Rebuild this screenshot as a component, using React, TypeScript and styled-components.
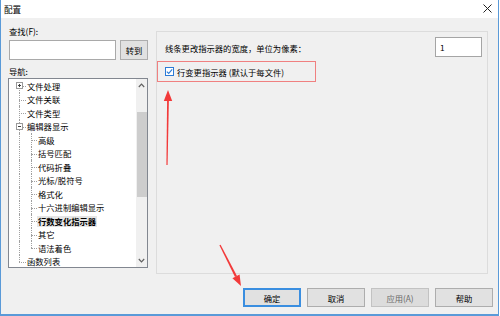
import styled, { createGlobalStyle } from 'styled-components';

const GlobalStyle = createGlobalStyle`
  html, body {
    margin: 0;
    padding: 0;
    background: #ffffff;
  }
  body {
    font-family: "Noto Sans CJK SC", "Noto Sans", sans-serif;
    font-size: 8.3px;
    color: #000;
  }
`;

type TreeNode = {
  label: string;
  level: 0 | 1;
  expander?: 'plus' | 'minus';
  selected?: boolean;
  first?: boolean;
  last?: boolean;
  lastChild?: boolean;
};

const nodes: TreeNode[] = [
  { label: '文件处理', level: 0, expander: 'plus', first: true },
  { label: '文件关联', level: 0 },
  { label: '文件类型', level: 0 },
  { label: '编辑器显示', level: 0, expander: 'minus' },
  { label: '高级', level: 1 },
  { label: '括号匹配', level: 1 },
  { label: '代码折叠', level: 1 },
  { label: '光标/脱符号', level: 1 },
  { label: '格式化', level: 1 },
  { label: '十六进制编辑显示', level: 1 },
  { label: '行数变化指示器', level: 1, selected: true },
  { label: '其它', level: 1 },
  { label: '语法着色', level: 1, lastChild: true },
  { label: '函数列表', level: 0, last: true },
];

const buttons = [
  { label: '确定', focused: true },
  { label: '取消' },
  { label: '应用(A)', disabled: true },
  { label: '帮助' },
];

export default function App() {
  return (
    <>
      <GlobalStyle />
      <Window>
        <TitleBar>
          <Title>配置</Title>
          <CloseIcon width="9" height="9" viewBox="0 0 9 9">
            <path d="M0.5 0.5 L8.5 8.5 M8.5 0.5 L0.5 8.5" stroke="#222" strokeWidth="1" />
          </CloseIcon>
        </TitleBar>
        <Body>
          <Main>
            <Sidebar>
              <FieldLabel>查找(F):</FieldLabel>
              <SearchRow>
                <SearchInput />
                <Button $width={28}>转到</Button>
              </SearchRow>
              <FieldLabel $gap={5}>导航:</FieldLabel>
              <TreeBox>
                <TreeList>
                  {nodes.map((n) => (
                    <TreeRow key={n.label} $level={n.level}>
                      <VGuide $left={10} $top={n.first ? '50%' : '0'} $bottom={n.last ? '50%' : '0'} />
                      {n.level === 1 && (
                        <VGuide $left={22} $top="0" $bottom={n.lastChild ? '50%' : '0'} />
                      )}
                      <HGuide $left={n.level === 0 ? 10 : 22} $width={n.level === 0 ? 7 : 6} />
                      {n.expander && <Expander $open={n.expander === 'minus'} />}
                      <TreeLabel $selected={n.selected}>{n.label}</TreeLabel>
                    </TreeRow>
                  ))}
                </TreeList>
                <ScrollBar>
                  <ScrollArrow>
                    <svg width="7" height="5" viewBox="0 0 7 5">
                      <path d="M0.8 4 L3.5 1.2 L6.2 4" fill="none" stroke="#606060" strokeWidth="1.2" />
                    </svg>
                  </ScrollArrow>
                  <ScrollTrack>
                    <ScrollThumb />
                  </ScrollTrack>
                  <ScrollArrow>
                    <svg width="7" height="5" viewBox="0 0 7 5">
                      <path d="M0.8 1 L3.5 3.8 L6.2 1" fill="none" stroke="#606060" strokeWidth="1.2" />
                    </svg>
                  </ScrollArrow>
                </ScrollBar>
              </TreeBox>
            </Sidebar>
            <GroupBox>
              <WidthRow>
                <RowText>线条更改指示器的宽度，单位为像素：</RowText>
                <NumberInput>1</NumberInput>
              </WidthRow>
              <CheckRow>
                <CheckBox width="9" height="9" viewBox="0 0 9 9">
                  <rect x="0.5" y="0.5" width="8" height="8" fill="#fff" stroke="#2c7bd6" />
                  <path d="M1.8 4.6 L3.7 6.4 L7.2 2.4" fill="none" stroke="#2c7bd6" strokeWidth="1.1" />
                </CheckBox>
                <RowText>行变更指示器 (默认于每文件)</RowText>
              </CheckRow>
            </GroupBox>
          </Main>
          <ButtonBar>
            {buttons.map((b) => (
              <Button key={b.label} $width={58} $focused={b.focused} $disabled={b.disabled}>
                {b.label}
              </Button>
            ))}
          </ButtonBar>
        </Body>
        <Annotations width="500" height="316" viewBox="0 0 500 316">
          <polygon points="166.4,165 167.6,165 168.9,100 167.1,100" fill="#f23a3a" />
          <polygon points="168,90 163.8,101 172.2,101" fill="#f23a3a" />
          <polygon points="219.4,245.3 220.6,244.7 237,276 235,277" fill="#f23a3a" />
          <polygon points="241,286 239.6,274.4 232.4,278.2" fill="#f23a3a" />
        </Annotations>
      </Window>
    </>
  );
}

const Window = styled.div`
  position: relative;
  box-sizing: border-box;
  width: 499px;
  height: 316px;
  border-left: 1px solid #5a9ad8;
  border-right: 1px solid #5a9ad8;
  border-bottom: 2px solid #5a9ad8;
  background: #f0f0f0;
  display: flex;
  flex-direction: column;
`;

const TitleBar = styled.div`
  height: 18px;
  background: #ffffff;
  display: flex;
  align-items: center;
  justify-content: space-between;
  padding: 0 6px 0 3px;
`;

const Title = styled.span`
  font-size: 8.6px;
  line-height: 18px;
`;

const CloseIcon = styled.svg`
  display: block;
  margin-top: -1px;
`;

const Body = styled.div`
  flex: 1;
  display: flex;
  flex-direction: column;
`;

const Main = styled.div`
  display: flex;
  align-items: flex-start;
  padding-left: 7px;
`;

const Sidebar = styled.div`
  width: 140px;
  margin-top: 7px;
  display: flex;
  flex-direction: column;
`;

const FieldLabel = styled.div<{ $gap?: number }>`
  height: 12px;
  line-height: 12px;
  padding-left: 1px;
  margin-top: ${({ $gap }) => $gap ?? 0}px;
`;

const SearchRow = styled.div`
  display: flex;
  gap: 4px;
  margin-top: 3px;
  margin-left: 1px;
`;

const SearchInput = styled.div`
  box-sizing: border-box;
  width: 107px;
  height: 20px;
  background: #fff;
  border: 1px solid #a9a9a9;
`;

const Button = styled.div<{ $width: number; $focused?: boolean; $disabled?: boolean }>`
  box-sizing: border-box;
  width: ${({ $width }) => $width}px;
  height: 19px;
  display: flex;
  align-items: center;
  justify-content: center;
  background: ${({ $disabled }) => ($disabled ? '#dcdcdc' : '#e1e1e1')};
  border: ${({ $focused, $disabled }) =>
    $focused ? '2px solid #3a8ee0' : $disabled ? '1px solid #c2c2c2' : '1px solid #adadad'};
  color: ${({ $disabled }) => ($disabled ? '#6a6a6a' : '#000')};
  ${SearchRow} & {
    height: 20px;
  }
`;

const TreeBox = styled.div`
  box-sizing: border-box;
  height: 190px;
  margin-top: 1px;
  border: 1px solid #828790;
  background: #fff;
  display: flex;
  overflow: hidden;
`;

const TreeList = styled.div`
  flex: 1;
  padding-top: 0.25px;
  overflow: hidden;
`;

const TreeRow = styled.div<{ $level: 0 | 1 }>`
  position: relative;
  height: 13.5px;
  display: flex;
  align-items: center;
  padding-left: ${({ $level }) => ($level === 0 ? 17 : 28)}px;
  white-space: nowrap;
`;

const VGuide = styled.span<{ $left: number; $top: string; $bottom: string }>`
  position: absolute;
  left: ${({ $left }) => $left}px;
  top: ${({ $top }) => $top};
  bottom: ${({ $bottom }) => $bottom};
  border-left: 1px dotted #a0a0a0;
`;

const HGuide = styled.span<{ $left: number; $width: number }>`
  position: absolute;
  left: ${({ $left }) => $left}px;
  width: ${({ $width }) => $width}px;
  top: 50%;
  border-top: 1px dotted #a0a0a0;
`;

const Expander = styled.span<{ $open: boolean }>`
  position: absolute;
  box-sizing: border-box;
  left: 7px;
  top: 3px;
  width: 7px;
  height: 7px;
  background: #fff;
  border: 1px solid #9a9a9a;

  &::before {
    content: '';
    position: absolute;
    left: 1px;
    right: 1px;
    top: 2px;
    border-top: 1px solid #404040;
  }

  &::after {
    content: '';
    display: ${({ $open }) => ($open ? 'none' : 'block')};
    position: absolute;
    top: 1px;
    bottom: 1px;
    left: 2px;
    border-left: 1px solid #404040;
  }
`;

const TreeLabel = styled.span<{ $selected?: boolean }>`
  display: inline-block;
  padding: 0 1px;
  line-height: 11px;
  background: ${({ $selected }) => ($selected ? '#e6e6e6' : 'transparent')};
  font-weight: ${({ $selected }) => ($selected ? 700 : 400)};
`;

const ScrollBar = styled.div`
  width: 11px;
  background: #f0f0f0;
  display: flex;
  flex-direction: column;
`;

const ScrollArrow = styled.div`
  height: 13px;
  display: flex;
  align-items: center;
  justify-content: center;
`;

const ScrollTrack = styled.div`
  flex: 1;
  display: flex;
  flex-direction: column;
  align-items: center;
`;

const ScrollThumb = styled.div`
  width: 10px;
  height: 85px;
  margin-top: 20px;
  background: #cdcdcd;
`;

const GroupBox = styled.div`
  box-sizing: border-box;
  width: 332px;
  height: 243px;
  margin-left: 8px;
  margin-top: 13px;
  border: 1px solid #dcdcdc;
  display: flex;
  flex-direction: column;
`;

const WidthRow = styled.div`
  display: flex;
  align-items: flex-start;
  justify-content: space-between;
  padding: 5px 5px 0 8px;
`;

const RowText = styled.span`
  line-height: 12px;
  white-space: nowrap;
  ${WidthRow} & {
    margin-top: 5px;
  }
`;

const NumberInput = styled.div`
  box-sizing: border-box;
  width: 47px;
  height: 20px;
  padding: 2px 0 0 4px;
  background: #fff;
  border: 1px solid #a5a5a5;
  line-height: 14px;
`;

const CheckRow = styled.div`
  box-sizing: border-box;
  width: 159px;
  height: 21px;
  margin-top: 4px;
  padding-left: 7px;
  display: flex;
  align-items: center;
  gap: 3px;
  border: 1px solid #f08080;
`;

const CheckBox = styled.svg`
  display: block;
`;

const ButtonBar = styled.div`
  display: flex;
  justify-content: flex-end;
  gap: 6px;
  margin-top: 14px;
  padding-right: 5px;
`;

const Annotations = styled.svg`
  position: absolute;
  left: -1px;
  top: 0;
  pointer-events: none;
`;
